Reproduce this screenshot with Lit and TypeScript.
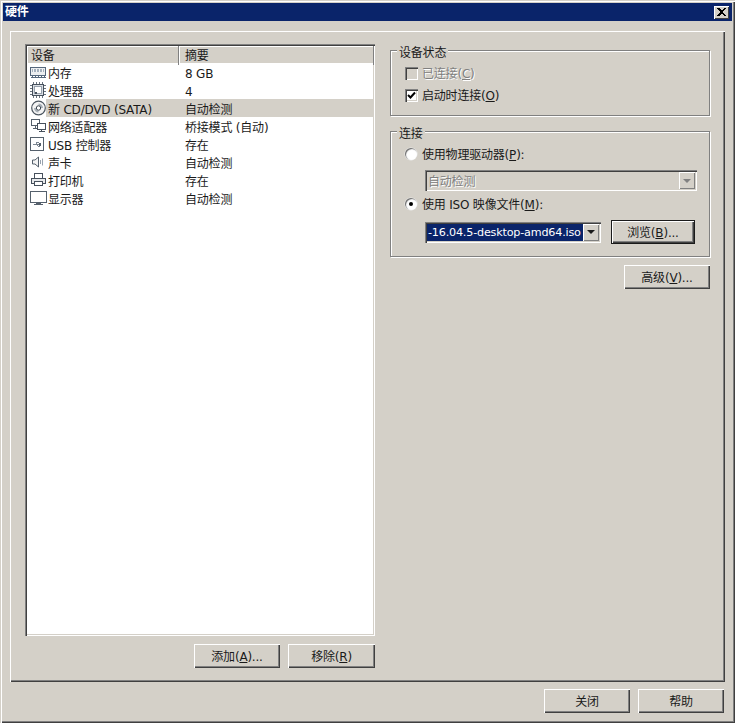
import { LitElement, html, css, svg } from "lit";
import { customElement } from "lit/decorators.js";

const S = (body: unknown, w = 18, h = 16) => html`<svg class="ic" width=${w} height=${h} viewBox="0 0 ${w} ${h}" fill="none" shape-rendering="crispEdges">${body}</svg>`;

const icons: Record<string, unknown> = {
  mem: S(svg`
    <rect x="1.500" y="3.500" width="15" height="8" fill="#eceef0" stroke="#55677c"/>
    <rect x="3" y="5" width="12" height="3" fill="#a4b0bd"/>
    <path d="M4.500 5v3M7.500 5v3M10.500 5v3M13.500 5v3" stroke="#f4f4f4"/>
    <path d="M1.500 13.500h15" stroke="#55677c"/>
    <path d="M3.500 12v1M6.500 12v1M9.500 12v1M12.500 12v1M15.500 12v1" stroke="#55677c"/>`),
  cpu: S(svg`
    <path d="M4.500 0v16M7.500 0v16M10.500 0v16M13.500 0v16M1 3.500h16M1 6.500h16M1 9.500h16M1 12.500h16" stroke="#6a7480"/>
    <rect x="3.500" y="2.500" width="11" height="11" fill="#d9dde2" stroke="#46505c"/>
    <rect x="5.500" y="4.500" width="7" height="7" fill="#fff" stroke="#98a2ae"/>
    <rect x="6" y="10" width="2" height="2" fill="#46505c"/>`),
  cd: html`<svg class="ic" width="18" height="16" viewBox="0 0 18 16" fill="none">
    <circle cx="9.500" cy="8" r="6.800" fill="#f4f4f4" stroke="#4c5660" stroke-width="1.200"/>
    <path d="M9.500 3.500a4.500 4.500 0 0 1 4.500 4.500h-2a2.500 2.500 0 0 0-2.500-2.500z" fill="#a8b0b8"/>
    <path d="M9.500 12.500a4.500 4.500 0 0 1-4.500-4.500h2a2.500 2.500 0 0 0 2.500 2.500z" fill="#a8b0b8"/>
    <circle cx="9.500" cy="8" r="2.200" fill="#fff" stroke="#3c4650"/></svg>`,
  net: S(svg`
    <rect x="2.500" y="1.500" width="8" height="6" fill="#fff" stroke="#55606c"/>
    <path d="M6.500 7.500v3M3.500 10.500h6" stroke="#55606c"/>
    <rect x="8.500" y="5.500" width="8" height="6" fill="#fff" stroke="#46505c"/>
    <path d="M12.500 11.500v2M9.500 13.500h6" stroke="#46505c"/>`),
  usb: S(svg`
    <rect x="1.500" y="1.500" width="13" height="13" fill="#fff" stroke="#55606c"/>
    <path d="M4 8.500h8M6.500 8.500l2-2.500h1.500M7.500 8.500l2 2h1.500" stroke="#7c8692"/>
    <rect x="10" y="7" width="2" height="3" fill="#55606c"/>`),
  snd: html`<svg class="ic" width="18" height="16" viewBox="0 0 18 16" fill="none">
    <path d="M3.500 6h2.500l3.500-3v10l-3.500-3H3.500z" fill="#f4f4f4" stroke="#55606c"/>
    <path d="M11.500 6v4M13.500 4.500v7" stroke="#98a2ae"/></svg>`,
  prn: S(svg`
    <rect x="5.500" y="1.500" width="8" height="5" fill="#fff" stroke="#46505c"/>
    <rect x="2.500" y="6.500" width="14" height="5" fill="#e8eaec" stroke="#46505c"/>
    <rect x="5.500" y="9.500" width="8" height="4" fill="#fff" stroke="#46505c"/>`),
  mon: S(svg`
    <rect x="1.500" y="1.500" width="16" height="11" fill="#fff" stroke="#55606c"/>
    <path d="M7 13.500h5M5 14.500h9" stroke="#55606c"/>`),
};

const rows = [
  ["mem", "内存", "8 GB"],
  ["cpu", "处理器", "4"],
  ["cd", "新 CD/DVD (SATA)", "自动检测"],
  ["net", "网络适配器", "桥接模式 (自动)"],
  ["usb", "USB 控制器", "存在"],
  ["snd", "声卡", "自动检测"],
  ["prn", "打印机", "存在"],
  ["mon", "显示器", "自动检测"],
];

const arrow = html`<span class="drop"><i></i></span>`;

@customElement("app-root")
export class AppRoot extends LitElement {
  static styles = css`
    :host { display: block; width: 735px; height: 723px; }
    * { box-sizing: border-box; }
    .win {
      width: 735px; height: 723px; background: #d4d0c8; padding: 3px;
      display: flex; flex-direction: column;
      font: 12px/18px "DejaVu Sans", "Noto Sans CJK SC", sans-serif; color: #1a1a1a;
      box-shadow: inset 1px 1px 0 #d4d0c8, inset 2px 2px 0 #fff, inset -1px -1px 0 #404040, inset -2px -2px 0 #808080;
      letter-spacing: -0.2px;
    }
    .title {
      height: 18px; background: #0a246a; color: #fff; font-weight: 700;
      display: flex; align-items: center; justify-content: space-between; padding: 0 3px 0 2px;
    }
    .x {
      width: 15px; height: 13px; background: #d4d0c8; display: flex; align-items: center; justify-content: center;
      box-shadow: inset 1px 1px 0 #fff, inset -1px -1px 0 #404040;
    }
    .panel {
      margin: 10px 7px 0 7px; height: 651px; padding: 13px 15px 14px 15px;
      display: flex; gap: 15px;
      box-shadow: inset 1px 1px 0 #fff, inset -1px -1px 0 #404040, inset -2px -2px 0 #808080;
    }
    .left { width: 350px; display: flex; flex-direction: column; gap: 8px; }
    .list {
      flex: 1; background: #fff; padding: 2px 1px 0 2px;
      box-shadow: inset 1px 1px 0 #808080, inset 2px 2px 0 #404040, inset -1px -1px 0 #fff, inset -2px -2px 0 #d4d0c8;
    }
    .head { display: grid; grid-template-columns: 152px 1fr; height: 17px; background: #d4d0c8; }
    .head span { padding-left: 4px; padding-top: 1px; box-shadow: inset -1px 0 0 #808080, inset 1px 1px 0 #fff; }
    .head span + span { padding-left: 6px; }
    .row { display: grid; grid-template-columns: 152px 1fr; grid-template-rows: 18px; height: 18px; }
    .cell { display: flex; align-items: flex-start; white-space: nowrap; height: 18px; overflow: hidden; }
    .cell .ic { flex: none; margin: 1px 0 0 2px; }
    .name span { flex: 1; height: 18px; margin-left: -1px; padding: 1px 0 0 2px; position: relative; top: 0; line-height: 20px; }
    .val { padding-left: 6px; line-height: 20px; padding-top: 1px; }
    .sel .name span, .sel .val { background: #d4d0c8; }
    .btns { display: flex; justify-content: flex-end; gap: 8px; }
    .btn {
      width: 86px; height: 24px; display: flex; align-items: center; justify-content: center; background: #d4d0c8; padding-top: 2px;
      box-shadow: inset 1px 1px 0 #fff, inset -1px -1px 0 #404040, inset -2px -2px 0 #808080;
    }
    .btn.wide { width: 87px; }
    .btn.def {
      margin-left: 1px;
      box-shadow: inset 0 0 0 1px #1a1a1a, inset 2px 2px 0 #fff, inset -2px -2px 0 #404040, inset -3px -3px 0 #808080;
    }
    u { text-underline-offset: 1px; }
    .right { width: 320px; padding-top: 6px; display: flex; flex-direction: column; gap: 15px; }
    .group {
      position: relative; border: 1px solid #808080; padding: 13px 14px 0 14px;
      box-shadow: 1px 1px 0 #fff, inset 1px 1px 0 #fff;
      display: flex; flex-direction: column;
    }
    .g1 { height: 66px; gap: 4px; }
    .g2 { height: 126px; }
    .legend { position: absolute; left: 6px; top: -6px; height: 14px; background: #d4d0c8; padding: 0 2px; line-height: 17px; }
    .opt { display: flex; align-items: center; gap: 5px; height: 18px; white-space: nowrap; }
    .opt > span:last-child { padding-top: 2px; }
    .opt.chk { gap: 4px; }
    .dis { color: #808080; text-shadow: 1px 1px 0 #fff; }
    .cb {
      width: 13px; height: 13px; flex: none; background: #fff; display: flex; align-items: center; justify-content: center;
      box-shadow: inset 1px 1px 0 #808080, inset 2px 2px 0 #404040, inset -1px -1px 0 #fff, inset -2px -2px 0 #d4d0c8;
    }
    .cb.off { background: #d4d0c8; }
    .radio {
      width: 12px; height: 12px; flex: none; border-radius: 50%; background: #fff; display: flex; align-items: center; justify-content: center;
      box-shadow: inset 1px 1px 1px #666, 0 0 0 .5px #eee;
    }
    .radio b { width: 4px; height: 4px; border-radius: 50%; background: #000; }
    .combo {
      height: 21px; margin-left: 20px; display: flex; padding: 2px; justify-content: space-between;
      box-shadow: inset 1px 1px 0 #808080, inset 2px 2px 0 #404040, inset -1px -1px 0 #fff, inset -2px -2px 0 #d4d0c8;
    }
    .c1 { width: 272px; margin-top: 7px; margin-bottom: 4px; }
    .c1 .txt { padding-left: 1px; line-height: 17px; padding-top: 2px; }
    .c2 { width: 176px; background: #fff; }
    .c2 .txt {
      width: 156px; background: #0a246a; color: #fff; overflow: hidden; white-space: nowrap; line-height: 17px; padding-left: 1px;
      font-family: "DejaVu Sans", sans-serif; font-size: 11.2px;
    }
    .drop {
      width: 16px; background: #d4d0c8; display: flex; align-items: center; justify-content: center;
      box-shadow: inset 1px 1px 0 #fff, inset -1px -1px 0 #808080;
    }
    .drop i { width: 0; height: 0; border: 4px solid transparent; border-top: 4px solid #1a1a1a; border-bottom: 0; }
    .c1 .drop i { border-top-color: #808080; }
    .isoRow { display: flex; align-items: center; gap: 9px; margin-top: 7px; }
    .adv { align-self: flex-end; margin-top: -7px; }
    .foot { display: flex; justify-content: flex-end; gap: 8px; margin: 7px 8px 0 0; }
  `;

  render() {
    return html`<div class="win">
      <div class="title"><span>硬件</span>
        <span class="x"><svg width="9" height="8" viewBox="0 0 9 8" shape-rendering="crispEdges"><path d="M0 0h2l2.500 2.500L7 0h2L5.500 4 9 8H7L4.500 5.500 2 8H0l3.500-4z" fill="#000"/></svg></span>
      </div>
      <div class="panel">
        <div class="left">
          <div class="list">
            <div class="head"><span>设备</span><span>摘要</span></div>
            ${rows.map(([i, n, v]) => html`<div class="row ${i === "cd" ? "sel" : ""}">
              <div class="cell name">${icons[i]}<span>${n}</span></div>
              <div class="cell val">${v}</div>
            </div>`)}
          </div>
          <div class="btns">
            <div class="btn">添加(<u>A</u>)...</div>
            <div class="btn wide">移除(<u>R</u>)</div>
          </div>
        </div>
        <div class="right">
          <div class="group g1">
            <span class="legend">设备状态</span>
            <div class="opt chk dis"><span class="cb off"></span><span>已连接(<u>C</u>)</span></div>
            <div class="opt chk"><span class="cb"><svg width="9" height="9" viewBox="0 0 9 9"><path d="M1 4l2.500 2.500L8 1.500" fill="none" stroke="#000" stroke-width="2"/></svg></span><span>启动时连接(<u>O</u>)</span></div>
          </div>
          <div class="group g2">
            <span class="legend">连接</span>
            <div class="opt"><span class="radio"></span><span>使用物理驱动器(<u>P</u>):</span></div>
            <div class="combo c1"><span class="txt dis">自动检测</span>${arrow}</div>
            <div class="opt"><span class="radio"><b></b></span><span>使用 ISO 映像文件(<u>M</u>):</span></div>
            <div class="isoRow">
              <div class="combo c2"><span class="txt">-16.04.5-desktop-amd64.iso</span>${arrow}</div>
              <div class="btn def">浏览(<u>B</u>)...</div>
            </div>
          </div>
          <div class="btn adv">高级(<u>V</u>)...</div>
        </div>
      </div>
      <div class="foot">
        <div class="btn">关闭</div>
        <div class="btn">帮助</div>
      </div>
    </div>`;
  }
}
